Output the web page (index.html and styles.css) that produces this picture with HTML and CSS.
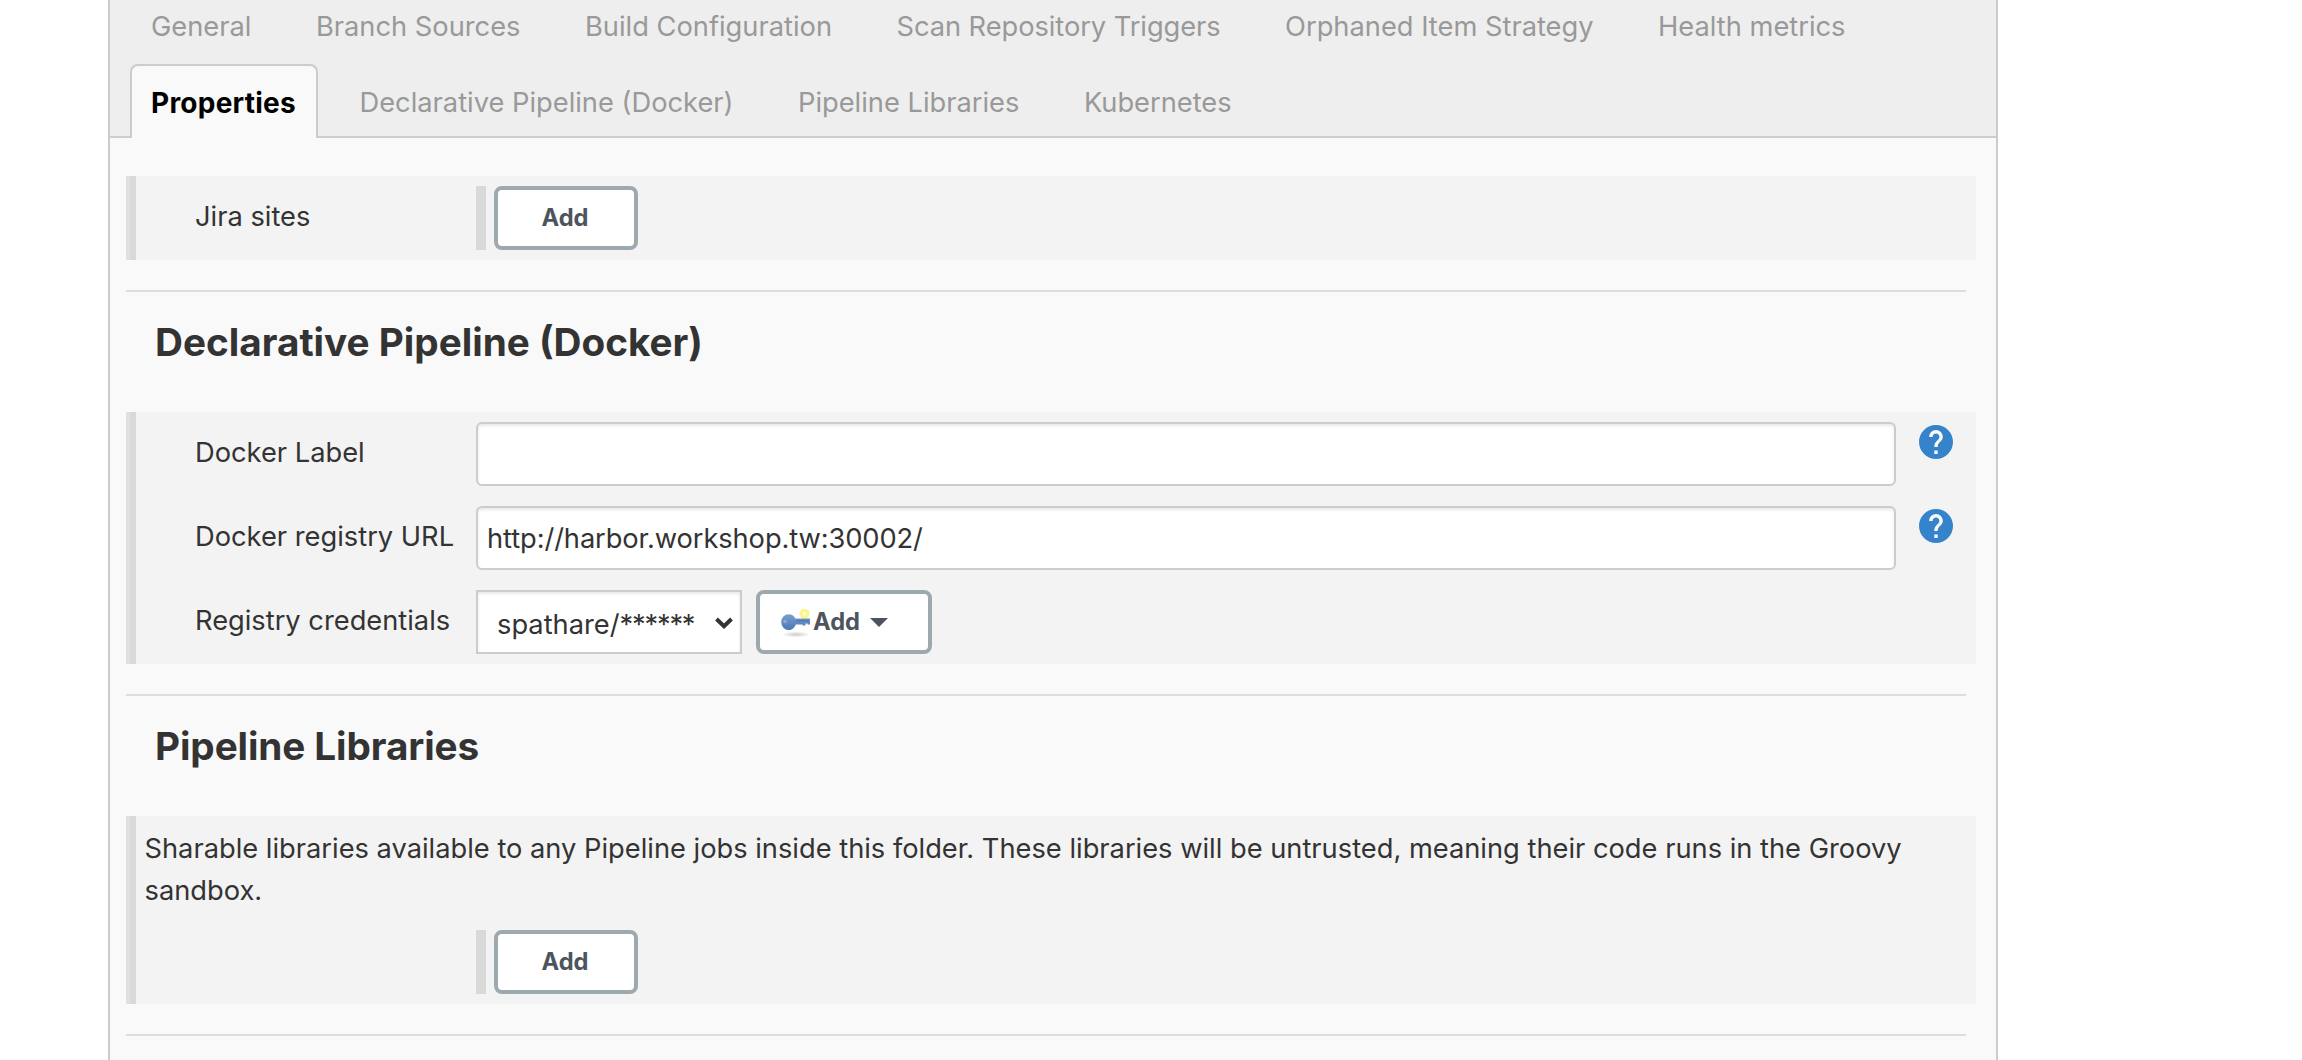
FILE: index.html
```html
<!DOCTYPE html>
<html lang="en">
<head>
<meta charset="utf-8">
<title>Folder configuration</title>
<link rel="stylesheet" href="styles.css">
</head>
<body>
<main class="panel">
  <nav class="tabs">
    <div class="tab-row">
      <a class="tab">General</a>
      <a class="tab">Branch Sources</a>
      <a class="tab">Build Configuration</a>
      <a class="tab tab-tight">Scan Repository Triggers</a>
      <a class="tab">Orphaned Item Strategy</a>
      <a class="tab">Health metrics</a>
    </div>
    <div class="tab-row">
      <a class="tab active">Properties</a>
      <a class="tab">Declarative Pipeline (Docker)</a>
      <a class="tab">Pipeline Libraries</a>
      <a class="tab">Kubernetes</a>
    </div>
  </nav>

  <div class="content">
    <section class="group">
      <div class="row">
        <label class="label">Jira sites</label>
        <div class="repeat"><button class="btn">Add</button></div>
      </div>
    </section>

    <hr class="rule">
    <h2 class="heading">Declarative Pipeline (Docker)</h2>
    <section class="group">
      <div class="row">
        <label class="label">Docker Label</label>
        <div class="input"></div>
        <svg class="help" viewBox="2 2 20 20"><circle cx="12" cy="12" r="10" fill="#3584cb"/><path fill="#f9f9f9" d="M13 19h-2v-2h2v2zm2.07-7.75l-.9.92C13.45 12.9 13 13.5 13 15h-2v-.5c0-1.1.45-2.1 1.17-2.83l1.24-1.26c.37-.36.59-.86.59-1.41 0-1.1-.9-2-2-2s-2 .9-2 2H8c0-2.21 1.79-4 4-4s4 1.79 4 4c0 .88-.36 1.68-.93 2.25z"/></svg>
      </div>
      <div class="row">
        <label class="label">Docker registry URL</label>
        <div class="input">http://harbor.workshop.tw:30002/</div>
        <svg class="help" viewBox="2 2 20 20"><circle cx="12" cy="12" r="10" fill="#3584cb"/><path fill="#f9f9f9" d="M13 19h-2v-2h2v2zm2.07-7.75l-.9.92C13.45 12.9 13 13.5 13 15h-2v-.5c0-1.1.45-2.1 1.17-2.83l1.24-1.26c.37-.36.59-.86.59-1.41 0-1.1-.9-2-2-2s-2 .9-2 2H8c0-2.21 1.79-4 4-4s4 1.79 4 4c0 .88-.36 1.68-.93 2.25z"/></svg>
      </div>
      <div class="row">
        <label class="label">Registry credentials</label>
        <div class="select">
          <span>spathare/<span class="stars">******</span></span>
          <svg class="chevron" viewBox="0 0 18 12"><path d="M1.5 2 9 9.2 16.5 2" fill="none" stroke="#333" stroke-width="4"/></svg>
        </div>
        <button class="btn btn-key">
          <svg class="key" viewBox="0 0 32 32">
            <defs>
              <linearGradient id="blue" x1="0" y1="0" x2="0" y2="1"><stop offset="0" stop-color="#7a9fd0"/><stop offset="1" stop-color="#4a77b6"/></linearGradient>
              <radialGradient id="shade"><stop offset="0" stop-color="#000" stop-opacity=".2"/><stop offset="1" stop-color="#000" stop-opacity="0"/></radialGradient>
            </defs>
            <ellipse cx="16" cy="28.5" rx="14" ry="3" fill="url(#shade)"/>
            <circle cx="24.500" cy="7.8" r="5" fill="#fbf68a"/>
            <circle cx="24.500" cy="7.8" r="2" fill="#fffcc8"/>
            <path d="M8.500 8.200c3.200 0 5.500 1.500 6.800 4.200H30V18.600H27.500V17.600H25.500V19.400H22.500V18.400H15.800C14.500 21.500 12 24 8.500 24A7.300 7.900 0 0 1 8.500 8.200z" fill="url(#blue)"/>
            <circle cx="5" cy="15.500" r="1.800" fill="#8fa9d0"/>
            <path d="M16 14.800H29" stroke="#4670ae" stroke-width="1"/>
          </svg>
          <span>Add</span>
          <svg class="caret" viewBox="0 0 18 9"><path d="M0 0H18L9 9z" fill="#4d545d"/></svg>
        </button>
      </div>
    </section>

    <hr class="rule">
    <h2 class="heading heading-tight">Pipeline Libraries</h2>
    <section class="group">
      <p class="description">Sharable libraries available to any Pipeline jobs inside this folder. These libraries will be untrusted, meaning their code runs in the Groovy sandbox.</p>
      <div class="row row-last">
        <span class="label"></span>
        <div class="repeat"><button class="btn">Add</button></div>
      </div>
    </section>

    <hr class="rule">
  </div>
</main>
</body>
</html>
```
FILE: styles.css
```css
* { box-sizing: border-box; }

body {
  margin: 0;
  height: 1060px;
  overflow: hidden;
  background: #fff;
  color: #333;
  font: 27.27px/42px Inter, "Liberation Sans", sans-serif;
}

.panel {
  width: 1890px;
  height: 1060px;
  margin-left: 108px;
  border: solid #ccc;
  border-width: 0 2px;
  background: #f9f9f9;
  overflow: hidden;
}

/* Tabs */
.tabs {
  display: flex;
  flex-direction: column;
  gap: 2px;
  height: 150px;
  margin-top: -12px;
  padding-left: 20px;
  background: #eee;
  box-shadow: inset 0 -2px #ccc;
}

.tab-row {
  display: flex;
  gap: 21.5px;
}

.tab {
  height: 74px;
  padding: 0 20px 0 19px;
  border: 2px solid transparent;
  border-bottom: 0;
  line-height: 74px;
  color: #999;
  white-space: nowrap;
}

.tab-tight { letter-spacing: -0.06px; }

.active {
  width: 188px;
  border-color: #ccc;
  border-radius: 8px 8px 0 0;
  background: #f9f9f9;
  color: #000;
  font-size: 28px;
  font-weight: 700;
  letter-spacing: 0.24px;
}

.active + .tab { padding-left: 18px; }

/* Form sections */
.content { padding: 38px 20px 0 16px; }

.group {
  border-left: 10px solid #d9d9d9;
  border-image: linear-gradient(to right, #e0e0e0 4px, #d9d9d9 4px) 0 0 0 10;
  background: #f3f3f3;
}

.row {
  display: flex;
  height: 84px;
  padding-top: 10px;
}

.row-last { height: 74px; padding-top: 0; }

.label {
  width: 340px;
  padding-left: 59px;
  line-height: 62px;
}

.input,
.select {
  height: 64px;
  border: 2px solid #ccc;
  background: #fff;
  box-shadow: inset 0 2px 3px rgba(0, 0, 0, 0.09);
}

.input {
  width: 1420px;
  padding-left: 9px;
  border-radius: 6px;
  line-height: 62px;
  letter-spacing: -0.09px;
}

.help {
  width: 34px;
  height: 34px;
  margin: 3px 0 0 23px;
}

.select {
  display: flex;
  justify-content: space-between;
  width: 266px;
  padding: 0 7px 0 19px;
  line-height: 66px;
}

.stars { letter-spacing: -1.2px; }

.chevron {
  width: 18px;
  height: 12px;
  margin-top: 25px;
}

.repeat {
  height: 64px;
  padding-left: 8px;
  border-left: 10px solid #d9d9d9;
}

.btn {
  display: flex;
  align-items: center;
  justify-content: center;
  width: 144px;
  height: 64px;
  padding: 0 2px 0 0;
  border: 4px solid #9da8af;
  border-radius: 8px;
  background: #fff;
  color: #4d545d;
  font: 700 23.7px/30px Inter, "Liberation Sans", sans-serif;
}

.btn-key {
  justify-content: flex-start;
  width: 176px;
  margin-left: 14px;
  padding-left: 20px;
}

.key {
  width: 32px;
  height: 32px;
  margin-right: 1px;
}

.caret {
  width: 18px;
  height: 9px;
  margin: 1px 0 0 10px;
}

.rule {
  height: 2px;
  margin: 30px 10px 0 0;
  border: 0;
  background: #ddd;
}

.heading {
  margin: 0;
  padding: 30px 0 50px 29px;
  font-size: 38.7px;
  font-weight: 700;
  line-height: 40px;
}

.heading-tight { letter-spacing: -0.1px; }

.description {
  margin: 0;
  padding: 12px 0 18px 8.5px;
}
```
